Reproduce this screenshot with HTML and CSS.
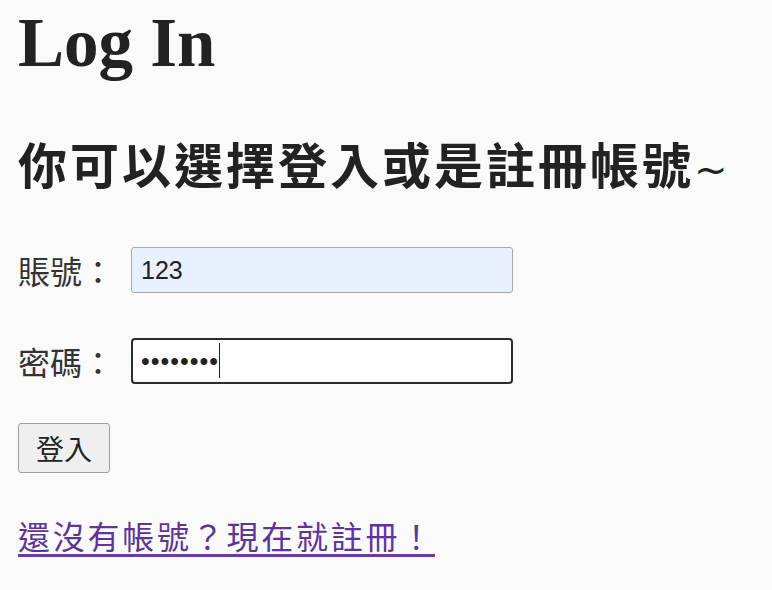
FILE: index.html
```html
<!DOCTYPE html>
<html lang="zh-Hant">
<head>
<meta charset="utf-8">
<title>Log In</title>
<link rel="stylesheet" href="styles.css">
</head>
<body>
  <h1 class="title">Log In</h1>
  <h2 class="subtitle">你可以選擇登入或是註冊帳號<span class="tilde">~</span></h2>
  <form class="login-form">
    <div class="field">
      <label class="field-label" for="account">賬號：</label>
      <input class="field-input autofilled" id="account" type="text" value="123">
    </div>
    <div class="field">
      <label class="field-label" for="password">密碼：</label>
      <div class="input-wrap">
        <input class="field-input focused" id="password" type="password" value="12345678">
        <span class="caret"></span>
      </div>
    </div>
    <button class="submit-btn" type="button">登入</button>
  </form>
  <a class="register-link" href="#">還沒有帳號？現在就註冊！</a>
</body>
</html>
```
FILE: styles.css
```css
html, body {
  height: 100%;
}

body {
  margin: 0;
  padding: 0 0 0 18px;
  background: #fafafa;
  color: #222;
  font-family: "Noto Sans CJK TC", "Noto Sans", sans-serif;
}

.title {
  margin: 4px 0 0;
  font: bold 69px/78px "Liberation Serif", "Noto Sans CJK TC", serif;
  color: #222;
}

.subtitle {
  margin: 50px 0 0;
  height: 62px;
  font-size: 49px;
  line-height: 62px;
  font-weight: bold;
  letter-spacing: 3px;
  color: #222;
}

.tilde {
  font-family: "DejaVu Sans", sans-serif;
  font-weight: normal;
  font-size: 40px;
  line-height: 0;
  letter-spacing: 0;
}

.login-form {
  display: flex;
  flex-direction: column;
  align-items: flex-start;
  margin-top: 53px;
}

.field {
  display: flex;
  align-items: center;
  gap: 17px;
  margin-bottom: 45px;
}

.field + .field {
  margin-bottom: 39px;
}

.field-label {
  font-size: 32px;
  line-height: 40px;
  color: #333;
}

.input-wrap {
  position: relative;
}

.field-input {
  box-sizing: border-box;
  display: block;
  width: 382px;
  height: 46px;
  margin: 0;
  padding: 0 9px;
  font: 25px "Liberation Sans", Arial, sans-serif;
  color: #222;
  border-radius: 3px;
  outline: none;
}

.autofilled {
  border: 1px solid #a9a9a9;
  background: #e8f0fe;
}

.focused {
  border: 2px solid #2b2b2b;
  background: #fff;
  border-radius: 4px;
  padding-left: 8px;
  letter-spacing: 1px;
}

.caret {
  position: absolute;
  left: 88px;
  top: 5px;
  width: 1px;
  height: 35px;
  background: #222;
}

.submit-btn {
  box-sizing: border-box;
  width: 92px;
  height: 50px;
  margin: 0;
  padding: 0;
  font-family: "Noto Sans CJK TC", sans-serif;
  font-size: 28px;
  color: #222;
  background: #efefef;
  border: 1px solid #a0a0a0;
  border-radius: 3px;
}

.register-link {
  display: inline-block;
  margin-top: 42px;
  font-size: 32px;
  line-height: 40px;
  letter-spacing: 2.75px;
  color: #5e3497;
  text-decoration: underline;
  text-decoration-thickness: 3px;
  text-underline-offset: 5px;
  text-decoration-color: #6a3aa5;
}
```
